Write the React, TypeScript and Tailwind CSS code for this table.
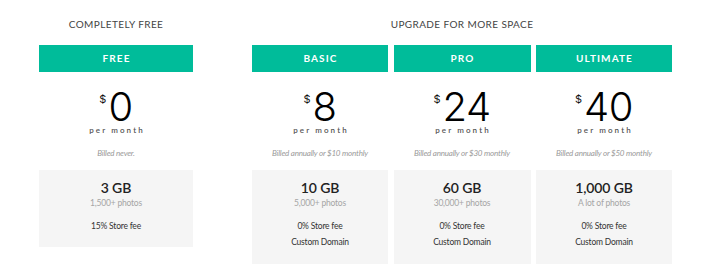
import React from "react";

type Plan = {
  name: string;
  price: string;
  billed: string;
  storage: string;
  photos: string;
  features: string[];
};

const free: Plan = {
  name: "FREE",
  price: "0",
  billed: "Billed never.",
  storage: "3 GB",
  photos: "1,500+ photos",
  features: ["15% Store fee"],
};

const paid: Plan[] = [
  {
    name: "BASIC",
    price: "8",
    billed: "Billed annually or $10 monthly",
    storage: "10 GB",
    photos: "5,000+ photos",
    features: ["0% Store fee", "Custom Domain"],
  },
  {
    name: "PRO",
    price: "24",
    billed: "Billed annually or $30 monthly",
    storage: "60 GB",
    photos: "30,000+ photos",
    features: ["0% Store fee", "Custom Domain"],
  },
  {
    name: "ULTIMATE",
    price: "40",
    billed: "Billed annually or $50 monthly",
    storage: "1,000 GB",
    photos: "A lot of photos",
    features: ["0% Store fee", "Custom Domain"],
  },
];

function Card({ plan, boxH }: { plan: Plan; boxH: string }) {
  return (
    <div className="flex flex-col">
      <div className="h-[27px] bg-[#00bc9a] flex items-center justify-center text-white text-[10px] font-bold tracking-[1.1px] pl-[1px]">
        {plan.name}
      </div>
      <div className="flex justify-center mt-[18px] h-[34px]">
        <span className="text-[11px] leading-none text-[#111] mt-[4px] mr-[2px]" style={{ fontFamily: "Inter, sans-serif" }}>$</span>
        <span
          className="text-[40px] leading-[34px] font-light text-black tracking-[-0.5px]"
          style={{ fontFamily: "Inter, sans-serif" }}
        >
          {plan.price}
        </span>
      </div>
      <div className="text-center text-[8px] font-semibold tracking-[2.1px] pl-[2px] text-[#555] leading-[12px]">
        per month
      </div>
      <div className="text-center text-[8px] italic text-[#9a9a9a] mt-[11px] leading-[12px] tracking-[-0.2px]">
        {plan.billed}
      </div>
      <div className={`bg-[#f5f5f5] mt-[11px] ${boxH} flex flex-col items-center`}>
        <div className="text-[14px] font-semibold text-[#222] mt-[9px] leading-[18px] tracking-[-0.1px]">{plan.storage}</div>
        <div className="text-[8.5px] text-[#a5a5a5] leading-[12px] tracking-[-0.2px]">{plan.photos}</div>
        <div className="mt-[11px] flex flex-col items-center gap-[4px]">
          {plan.features.map((f) => (
            <div key={f} className="text-[8.5px] text-[#333] leading-[12px] tracking-[-0.2px]">
              {f}
            </div>
          ))}
        </div>
      </div>
    </div>
  );
}

export default function App() {
  return (
    <div
      className="w-[710px] h-[274px] bg-white flex pl-[39px] pt-[16px]"
      style={{ fontFamily: "Lato, 'Open Sans', 'Liberation Sans', sans-serif" }}
    >
      <div className="w-[154px] flex flex-col">
        <div className="text-center text-[10px] tracking-[0.4px] text-[#444] leading-[14px] h-[29px] pt-[1px]">
          COMPLETELY FREE
        </div>
        <Card plan={free} boxH="h-[77px]" />
      </div>
      <div className="ml-[59px] w-[420px] flex flex-col">
        <div className="text-center text-[10px] tracking-[0.4px] text-[#444] leading-[14px] h-[29px] pt-[1px]">
          UPGRADE FOR MORE SPACE
        </div>
        <div className="grid grid-cols-[136px_137px_136px] gap-[5.5px]">
          {paid.map((p) => (
            <Card key={p.name} plan={p} boxH="h-[94px]" />
          ))}
        </div>
      </div>
    </div>
  );
}
